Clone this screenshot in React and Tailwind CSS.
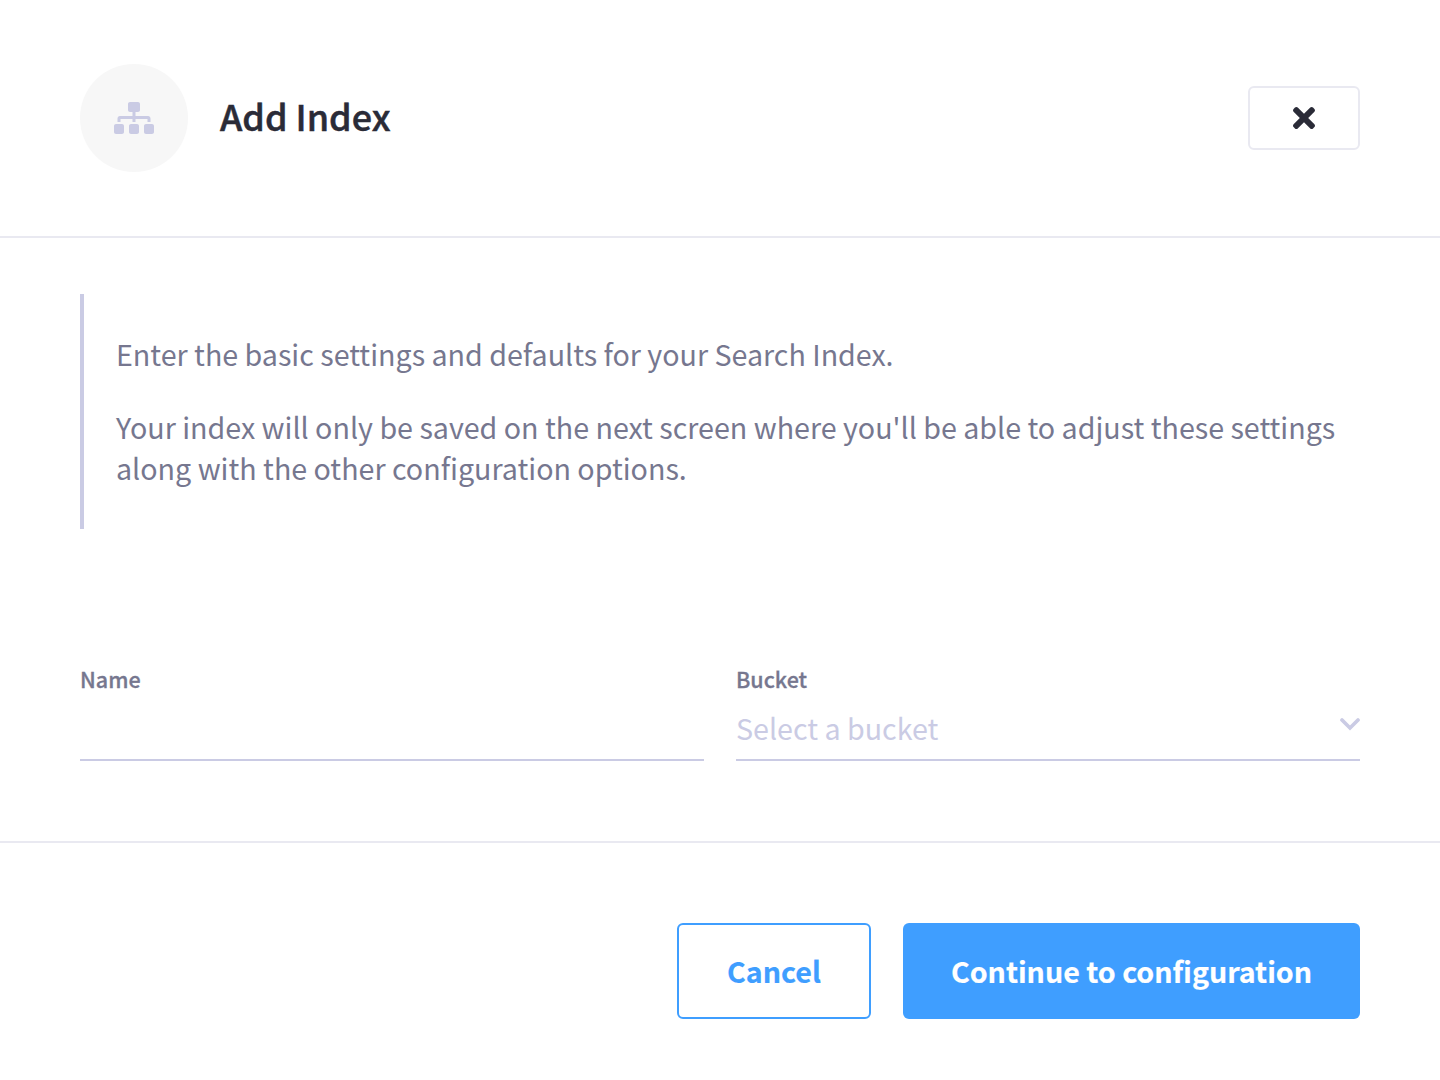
const F = "font-['Noto_Sans_CJK_SC',sans-serif]";

function SitemapIcon() {
  return (
    <svg width="40" height="32" viewBox="0 0 640 512" fill="#cacbe4">
      <path d="M128 352H32c-17.670 0-32 14.330-32 32v96c0 17.670 14.330 32 32 32h96c17.670 0 32-14.330 32-32v-96c0-17.670-14.330-32-32-32zm-24-80h192v48h48v-48h192v48h48v-57.590c0-21.170-17.230-38.410-38.410-38.410H344v-64h40c17.670 0 32-14.330 32-32V32c0-17.670-14.330-32-32-32H256c-17.670 0-32 14.330-32 32v96c0 17.670 14.330 32 32 32h40v64H94.410C73.230 224 56 241.230 56 262.410V320h48v-48zm264 80h-96c-17.670 0-32 14.330-32 32v96c0 17.670 14.330 32 32 32h96c17.670 0 32-14.330 32-32v-96c0-17.670-14.330-32-32-32zm240 0h-96c-17.670 0-32 14.330-32 32v96c0 17.670 14.330 32 32 32h96c17.670 0 32-14.330 32-32v-96c0-17.670-14.330-32-32-32z" />
    </svg>
  );
}

export default function App() {
  return (
    <div className={"h-[1080px] w-[1440px] bg-white text-[#76778f] " + F}>
      <header className="flex h-[238px] items-center border-b-2 border-[#e9e9f1] px-20">
        <div className="flex size-[108px] items-center justify-center rounded-full bg-[#f7f7f7]">
          <SitemapIcon />
        </div>
        <h1 className="mb-[6px] ml-8 text-[35.9px] leading-[48px] font-medium text-[#2a2b37] [-webkit-text-stroke:0.5px_#2a2b37]">Add Index</h1>
        <button className="ml-auto flex h-16 w-28 items-center justify-center rounded-md border-2 border-[#e9e9f1]" aria-label="Close">
          <svg width="22" height="22" viewBox="0 0 352 352" fill="#2a2b37">
            <path d="M242.720 176l100.070-100.070c12.280-12.280 12.280-32.190 0-44.480l-22.240-22.240c-12.280-12.280-32.190-12.280-44.480 0L176 109.280 75.930 9.210c-12.280-12.280-32.190-12.280-44.480 0L9.210 31.450c-12.280 12.280-12.280 32.190 0 44.480L109.280 176 9.210 276.070c-12.280 12.280-12.280 32.190 0 44.480l22.240 22.240c12.280 12.280 32.200 12.280 44.480 0L176 242.720l100.070 100.070c12.280 12.280 32.200 12.280 44.480 0l22.240-22.240c12.280-12.280 12.280-32.190 0-44.480L242.720 176z" />
          </svg>
        </button>
      </header>
      <main className="flex h-[605px] flex-col border-b-2 border-[#e9e9f1] px-20 pt-14">
        <div className="h-[235px] border-l-4 border-[#cacbe4] pt-[39px] pl-8 text-[28.65px] leading-[41px]">
          <p>Enter the basic settings and defaults for your Search Index.</p>
          <p className="mt-8">Your index will only be saved on the next screen where you'll be able to adjust these settings along with the other configuration options.</p>
        </div>
        <div className="mt-[134px] grid grid-cols-2 gap-8">
          <div className="h-[98px] border-b-2 border-[#cacbe4]">
            <div className="text-[21.5px] leading-8 font-medium [-webkit-text-stroke:0.3px_#76778f]">Name</div>
          </div>
          <div className="h-[98px] border-b-2 border-[#cacbe4]">
            <div className="text-[21.5px] leading-8 font-medium [-webkit-text-stroke:0.3px_#76778f]">Bucket</div>
            <div className="flex justify-between pt-3 text-[28.65px] leading-[41px] text-[#cacbe4]">
              Select a bucket
              <svg className="mt-[11px]" width="20" height="13" viewBox="0 0 20 13" fill="none" stroke="#cacbe4" strokeWidth="3.7" strokeLinecap="round">
                <path d="M2 2L10 10L18 2" />
              </svg>
            </div>
          </div>
        </div>
      </main>
      <footer className="flex justify-end gap-8 px-20 pt-20 text-[28.6px] font-bold">
        <button className="h-24 w-[194px] rounded-md border-2 border-[#3f9eff] text-[#3f9eff] [-webkit-text-stroke:0.2px_#3f9eff]">Cancel</button>
        <button className="h-24 w-[457px] rounded-md bg-[#3f9eff] text-white [-webkit-text-stroke:0.2px_#fff]">Continue to configuration</button>
      </footer>
    </div>
  );
}
